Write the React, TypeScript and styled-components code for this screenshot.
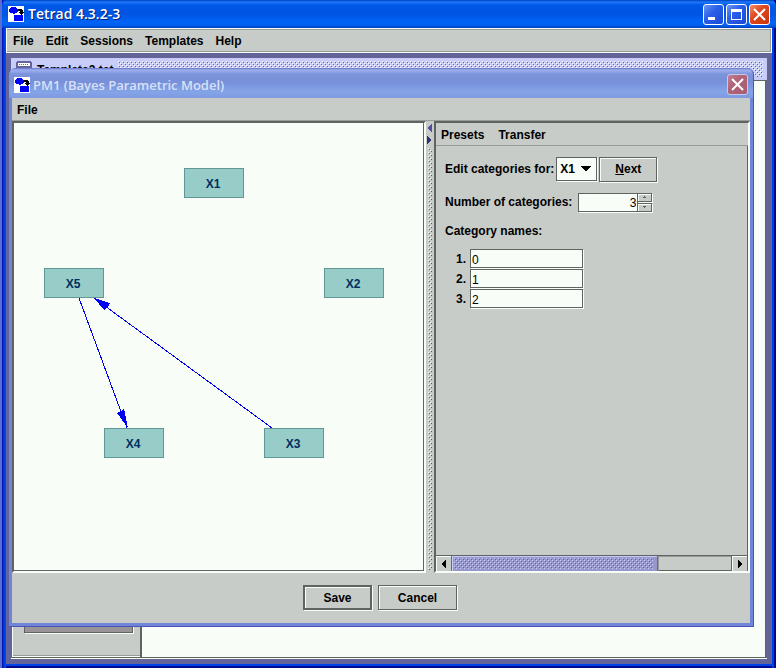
import React from "react";
import styled, { createGlobalStyle, css } from "styled-components";

const face = "#c8ccc8";
const paper = "#f8fdf8";
const dark = "#606460";
const mid = "#989c98";
const desk = "#636499";

const dots = (light: string, shade: string) =>
  `url("data:image/svg+xml,${encodeURIComponent(
    `<svg xmlns='http://www.w3.org/2000/svg' width='4' height='4' shape-rendering='crispEdges'><path fill='${light}' d='M0 0h1v1H0zM2 2h1v1H2z'/><path fill='${shade}' d='M1 1h1v1H1zM3 3h1v1H3z'/></svg>`
  )}")`;

const Global = createGlobalStyle`
  * { box-sizing: border-box; }
  body { margin: 0; background: ${desk}; }
  body, button, input, select {
    font: bold 12px/16px "Liberation Sans", Arial, sans-serif;
    color: #000;
  }
`;

const AppWindow = styled.div`
  display: flex;
  flex-direction: column;
  min-height: 100vh;
  padding: 0 4px 4px 6px;
  background: linear-gradient(to right, #5c6cd0 2px, #0010a8 2px, #0038e0 4px, #0050f0 6px, transparent 6px),
    linear-gradient(to left, #000a90 2px, #0040e8 2px, #0040e8 4px, transparent 4px),
    linear-gradient(to top, #000a90 2px, #0040e8 2px);
`;

const TitleBar = styled.header`
  display: flex;
  align-items: center;
  gap: 2px;
  height: 28px;
  margin: 0 -4px 0 -4px;
  padding: 0 6px 0 6px;
  border-radius: 6px 6px 0 0;
  background: linear-gradient(#0040c0, #1c78f8 2px, #0058e8 5px, #0054e0 14px, #0064f8 22px, #0060f0 25px, #0040c0);
`;

const AppTitle = styled.h1`
  flex: 1;
  margin: 0;
  padding-left: 2px;
  font: 600 14px/18px "Open Sans", "Trebuchet MS", sans-serif;
  color: #fff;
  text-shadow: 1px 1px 0 #0a2080;
`;

const CaptionButton = styled.button<{ $tone?: "close" | "faded" }>`
  display: grid;
  place-items: center;
  flex: none;
  width: 21px;
  height: 21px;
  padding: 0;
  border: 1px solid ${(p) => (p.$tone === "faded" ? "#c8c8ec" : "#fff")};
  border-radius: 3px;
  background: ${(p) =>
    p.$tone === "close"
      ? "linear-gradient(135deg, #f09070, #e04820 40%, #c83408)"
      : p.$tone === "faded"
        ? "linear-gradient(135deg, #c08098, #b06478 40%, #a85c70)"
        : "linear-gradient(135deg, #6c98f8, #2c60e8 40%, #1848d8)"};
`;

const CaptionGroup = styled.div`
  display: flex;
  gap: 2px;
`;

const MenuBar = styled.nav<{ $kind: "app" | "dialog" | "panel" }>`
  display: flex;
  align-items: center;
  flex: none;
  background: ${face};
  ${(p) =>
    p.$kind === "app"
      ? css`
          gap: 12px;
          height: 25px;
          padding: 0 6px;
          border: 1px solid ${paper};
          box-shadow: inset 0 1px ${mid}, inset 0 -1px ${mid}, inset -1px 0 ${mid};
        `
      : css`
          gap: 14px;
          height: 23px;
          padding: 2px 5px 0;
          border-bottom: 1px solid ${mid};
        `}
`;

const MenuItem = styled.button`
  padding: 0;
  border: 0;
  background: none;
`;

const Desktop = styled.main`
  position: relative;
  display: flex;
  flex: 1;
  padding: 5px;
  background: ${desk};
`;

const SessionFrame = styled.section`
  display: flex;
  flex: 1;
  flex-direction: column;
`;

const SessionTitle = styled.div`
  display: flex;
  align-items: flex-start;
  gap: 5px;
  height: 23px;
  padding: 3px 4px 3px 5px;
  border-bottom: 1px solid ${dark};
  background: #c8ccf8;
`;

const SessionName = styled.span`
  line-height: 18px;
`;

const Grip = styled.div`
  flex: 1;
  align-self: stretch;
  background: ${dots("#fff", "#63649c")};
`;

const SessionBody = styled.div`
  display: grid;
  grid-template-columns: 130px 1fr;
  flex: 1;
  padding-left: 1px;
  border-bottom: 1px solid ${paper};
`;

const ToolColumn = styled.div`
  display: flex;
  align-items: flex-end;
  padding: 0 7px 24px 12px;
  border: solid ${dark};
  border-width: 0 2px 1px 0;
  background: ${face};
  box-shadow: inset 1px 0 ${paper}, inset 0 -1px ${paper}, inset 0 -2px ${mid};
`;

const ToolSlot = styled.div`
  flex: 1;
  height: 60px;
  border: 1px solid ${dark};
  background: #989498;
  box-shadow: 1px 1px ${paper};
`;

const SessionCanvas = styled.div`
  margin-right: 1px;
  border: solid ${dark};
  border-width: 0 1px 1px 0;
  background: ${paper};
`;

const Dialog = styled.section`
  position: absolute;
  top: 15px;
  right: 18px;
  bottom: 37px;
  left: 3px;
  display: flex;
  flex-direction: column;
  padding: 0 3px 3px;
  border: 1px solid #4c54b8;
  border-width: 0 1px 1px 0;
  border-radius: 7px 7px 0 0;
  background: #7084d8;
`;

const DialogTitleBar = styled.header`
  display: flex;
  align-items: center;
  gap: 3px;
  flex: none;
  height: 30px;
  margin: 0 -3px;
  padding: 3px 5px 0 5px;
  border-radius: 7px 7px 0 0;
  background: linear-gradient(#6474c8, #a0b0f0 2px, #7c94dc 6px, #7890d8 14px, #84a4e8 24px, #8098e0);
`;

const DialogTitle = styled.h2`
  flex: 1;
  margin: 0;
  font: 600 13px/18px "Open Sans", "Trebuchet MS", sans-serif;
  color: #d8e0f8;
`;

const DialogBody = styled.div`
  display: grid;
  grid-template-columns: 414px 8px minmax(0, 1fr);
  flex: 1;
  min-height: 0;
  background: ${face};
`;

const sunken = css`
  border: solid;
  border-width: 2px;
  border-color: ${dark} ${paper} ${paper} ${dark};
  box-shadow: inset -1px -1px ${dark};
`;

const GraphPane = styled.div`
  position: relative;
  ${sunken}
  background: ${paper};
`;

const Edges = styled.svg`
  position: absolute;
  inset: 0;
  width: 100%;
  height: 100%;
`;

const Node = styled.div<{ $x: number; $y: number }>`
  position: absolute;
  left: ${(p) => p.$x}px;
  top: ${(p) => p.$y}px;
  width: 60px;
  height: 30px;
  padding-right: 2px;
  border: 1px solid #609898;
  background: #98ccc8;
  color: #003060;
  line-height: 30px;
  text-align: center;
`;

const Divider = styled.div`
  display: flex;
  flex-direction: column;
  align-items: flex-start;
  gap: 4px;
  padding: 3px 1px;
`;

const DividerDots = styled.div`
  flex: 1;
  width: 4px;
  margin-left: 1px;
  background: ${dots("#fff", dark)};
`;

const SidePane = styled.div`
  display: flex;
  flex-direction: column;
  ${sunken}
`;

const Form = styled.form`
  display: flex;
  flex-direction: column;
  align-items: flex-start;
  flex: 1;
  padding: 10px 9px;
`;

const FormRow = styled.div`
  display: flex;
  align-items: center;
  gap: 2px;
  height: 26px;
  margin-bottom: 7px;
`;

const Combo = styled.span`
  position: relative;
  display: flex;
  width: 41px;
  border: 1px solid ${dark};
  box-shadow: 1px 1px ${paper};
  background: ${paper};

  svg {
    position: absolute;
    top: 8px;
    right: 5px;
    pointer-events: none;
  }
`;

const ComboSelect = styled.select`
  appearance: none;
  width: 100%;
  height: 22px;
  padding: 0 0 0 3px;
  border: 0;
  background: none;
`;

const PushButton = styled.button<{ $width: number; $primary?: boolean }>`
  width: ${(p) => p.$width}px;
  height: 25px;
  padding: 0;
  border: ${(p) => (p.$primary ? 2 : 1)}px solid ${dark};
  background: ${face};
  box-shadow: 1px 1px ${paper}, inset 1px 1px ${paper};
`;

const field = css`
  border: 1px solid ${dark};
  border-radius: 0;
  background: ${paper};
  font-weight: normal;
  outline: 0;
  box-shadow: 1px 1px ${paper};
`;

const Spinner = styled.span`
  display: flex;
  height: 19px;
  margin-left: 4px;
`;

const SpinnerInput = styled.input`
  ${field}
  width: 60px;
  padding: 1px 1px 0;
  text-align: right;
`;

const SpinnerArrows = styled.span`
  display: flex;
  flex-direction: column;
  gap: 1px;
`;

const SpinnerButton = styled.button`
  display: grid;
  place-items: center;
  width: 14px;
  height: 9px;
  padding: 0;
  border: 1px solid ${dark};
  border-left: 0;
  background: ${face};
  box-shadow: 1px 1px ${paper}, inset 1px 1px ${paper};
`;

const GroupLabel = styled.div`
  margin-top: 1px;
  margin-bottom: 10px;
`;

const NameRow = styled.div`
  display: flex;
  align-items: flex-start;
  gap: 4px;
  height: 20px;
`;

const NameLabel = styled.label`
  width: 21px;
  line-height: 20px;
  text-align: right;
`;

const NameInput = styled.input`
  ${field}
  width: 113px;
  height: 19px;
  padding: 2px 1px 0;
`;

const ScrollBar = styled.div`
  display: grid;
  grid-template-columns: 15px 2fr 73px 16px;
  height: 16px;
  border-top: 1px solid ${dark};
  border-bottom: 1px solid ${dark};
  margin-right: 1px;
`;

const ScrollButton = styled.button<{ $end?: boolean }>`
  display: grid;
  place-items: center;
  padding: 0;
  border: 0;
  border-left: ${(p) => (p.$end ? `1px solid ${dark}` : 0)};
  background: ${face};
  box-shadow: inset 1px 1px ${paper};
`;

const ScrollThumb = styled.div`
  padding: 2px;
  border: 1px solid #6464a0;
  border-width: 0 1px 0 1px;
  background: #9898cc;
  box-shadow: inset 1px 1px #c8ccf8;
`;

const ThumbGrip = styled.div`
  height: 11px;
  margin-right: 2px;
  background: ${dots("#c8ccf8", "#63649c")};
`;

const ScrollTrack = styled.div`
  box-shadow: inset 1px 1px ${mid};
`;

const DialogActions = styled.footer`
  display: flex;
  justify-content: center;
  gap: 6px;
  flex: none;
  height: 50px;
  padding: 12px 2px 0 0;
  background: ${face};
`;

const AppIcon = () => (
  <svg width="16" height="16" viewBox="0 0 16 16" shapeRendering="crispEdges" aria-hidden="true">
    <path fill="#fff" d="M0 0h16v16H0z" />
    <path fill="#0000f8" d="M3 1h5v1h1v1h1v3H9v1H7v1H5V7H2V6H1V3h1V2h1zM6 9h9v6H6z" />
    <path fill="#000" d="M10 3h4v1h1v2h1v1h-1v1h-1v1h-1V8h-1V7h-1V6h1V5H9V4h1z" />
  </svg>
);

const CloseGlyph = () => (
  <svg width="13" height="13" viewBox="0 0 13 13" aria-hidden="true">
    <path d="M1 1l11 11M12 1l-11 11" stroke="#fff" strokeWidth="2" />
  </svg>
);

const Triangle = ({ d, w, h, fill = "#000" }: { d: string; w: number; h: number; fill?: string }) => (
  <svg width={w} height={h} viewBox={`0 0 ${w} ${h}`} shapeRendering="crispEdges" aria-hidden="true">
    <path d={d} fill={fill} />
  </svg>
);

const nodes = [
  { name: "X1", x: 170, y: 45 },
  { name: "X2", x: 310, y: 145 },
  { name: "X3", x: 250, y: 305 },
  { name: "X4", x: 90, y: 305 },
  { name: "X5", x: 30, y: 145 },
];

const menus = ["File", "Edit", "Sessions", "Templates", "Help"];

export default function App() {
  return (
    <>
      <Global />
      <AppWindow>
        <TitleBar>
          <AppIcon />
          <AppTitle>Tetrad 4.3.2-3</AppTitle>
          <CaptionGroup>
            <CaptionButton aria-label="Minimize">
              <svg width="13" height="13" aria-hidden="true">
                <path d="M1 9h7v3H1z" fill="#fff" />
              </svg>
            </CaptionButton>
            <CaptionButton aria-label="Maximize">
              <svg width="13" height="13" aria-hidden="true">
                <path fillRule="evenodd" d="M1 1h11v11H1zM2 4h9v7H2z" fill="#fff" />
              </svg>
            </CaptionButton>
            <CaptionButton $tone="close" aria-label="Close">
              <CloseGlyph />
            </CaptionButton>
          </CaptionGroup>
        </TitleBar>
        <MenuBar $kind="app">
          {menus.map((m) => (
            <MenuItem key={m}>{m}</MenuItem>
          ))}
        </MenuBar>
        <Desktop>
          <SessionFrame>
            <SessionTitle>
              <svg width="16" height="16" shapeRendering="crispEdges" aria-hidden="true">
                <path fill="#63649c" d="M1 0h14v1h1v15H0V1h1z" />
                <path fill="#fff" d="M2 2h12v3H2z" />
                <path fill="#c8ccf8" d="M2 7h12v7H2z" />
                <path fill="#63649c" d="M3 3h1v1H3zM5 3h1v1H5zM7 3h1v1H7zM9 3h1v1H9zM11 3h1v1h-1z" />
              </svg>
              <SessionName>Template2.tet</SessionName>
              <Grip />
            </SessionTitle>
            <SessionBody>
              <ToolColumn>
                <ToolSlot />
              </ToolColumn>
              <SessionCanvas />
            </SessionBody>
          </SessionFrame>

          <Dialog role="dialog" aria-labelledby="dialog-title">
            <DialogTitleBar>
              <AppIcon />
              <DialogTitle id="dialog-title">PM1 (Bayes Parametric Model)</DialogTitle>
              <CaptionButton $tone="faded" aria-label="Close dialog">
                <CloseGlyph />
              </CaptionButton>
            </DialogTitleBar>
            <MenuBar $kind="dialog">
              <MenuItem>File</MenuItem>
            </MenuBar>
            <DialogBody>
              <GraphPane>
                <Edges aria-hidden="true" shapeRendering="crispEdges">
                  <g stroke="#0000f0" fill="#0000f0">
                    <path d="M65 175L113 305M258 305L80 175" fill="none" />
                    <path stroke="none" d="M114 305L103 290L107 288L110 286ZM80 175L96 180L94 184L90 187Z" />
                  </g>
                </Edges>
                {nodes.map((n) => (
                  <Node key={n.name} $x={n.x} $y={n.y}>
                    {n.name}
                  </Node>
                ))}
              </GraphPane>
              <Divider>
                <Triangle w={5} h={8} d="M4 0h1v8H4V7H3V6H2V5H1V3h1V2h1V1h1z" fill="#50509c" />
                <Triangle w={5} h={8} d="M0 0h1v1h1v1h1v1h1v2H3v1H2v1H1v1H0z" fill="#303074" />
                <DividerDots />
              </Divider>
              <SidePane>
                <MenuBar $kind="panel">
                  <MenuItem>Presets</MenuItem>
                  <MenuItem>Transfer</MenuItem>
                </MenuBar>
                <Form onSubmit={(e) => e.preventDefault()}>
                  <FormRow>
                    <label htmlFor="variable">Edit categories for:</label>
                    <Combo>
                      <ComboSelect id="variable" defaultValue="X1">
                        {nodes.map((n) => (
                          <option key={n.name}>{n.name}</option>
                        ))}
                      </ComboSelect>
                      <Triangle w={10} h={5} d="M0 0h10v1H9v1H8v1H7v1H6v1H4V4H3V3H2V2H1V1H0z" />
                    </Combo>
                    <PushButton type="button" $width={58}>
                      <u>N</u>ext
                    </PushButton>
                  </FormRow>
                  <FormRow>
                    <label htmlFor="count">Number of categories:</label>
                    <Spinner>
                      <SpinnerInput id="count" defaultValue="3" />
                      <SpinnerArrows>
                        <SpinnerButton type="button" aria-label="Increase">
                          <Triangle w={3} h={2} d="M1 0h1v1h1v1H0V1h1z" fill={dark} />
                        </SpinnerButton>
                        <SpinnerButton type="button" aria-label="Decrease">
                          <Triangle w={3} h={2} d="M0 0h3v1H2v1H1V1H0z" fill={dark} />
                        </SpinnerButton>
                      </SpinnerArrows>
                    </Spinner>
                  </FormRow>
                  <GroupLabel>Category names:</GroupLabel>
                  {["0", "1", "2"].map((value, i) => (
                    <NameRow key={value}>
                      <NameLabel htmlFor={`name-${i}`}>{i + 1}.</NameLabel>
                      <NameInput id={`name-${i}`} defaultValue={value} />
                    </NameRow>
                  ))}
                </Form>
                <ScrollBar>
                  <ScrollButton aria-label="Scroll left">
                    <Triangle w={4} h={8} d="M3 0h1v8H3V7H2V6H1V5H0V3h1V2h1V1h1z" />
                  </ScrollButton>
                  <ScrollThumb>
                    <ThumbGrip />
                  </ScrollThumb>
                  <ScrollTrack />
                  <ScrollButton $end aria-label="Scroll right">
                    <Triangle w={4} h={8} d="M0 0h1v1h1v1h1v1h1v2H3v1H2v1H1v1H0z" />
                  </ScrollButton>
                </ScrollBar>
              </SidePane>
            </DialogBody>
            <DialogActions>
              <PushButton $width={69} $primary>
                Save
              </PushButton>
              <PushButton $width={79}>Cancel</PushButton>
            </DialogActions>
          </Dialog>
        </Desktop>
      </AppWindow>
    </>
  );
}
